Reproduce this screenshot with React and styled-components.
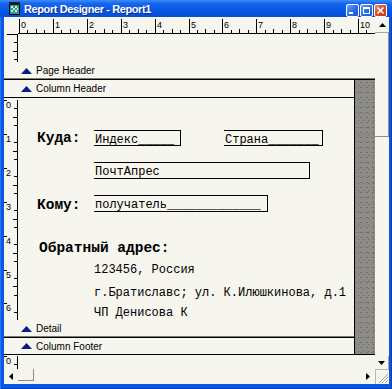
import React from 'react'
import styled, { createGlobalStyle } from 'styled-components'

const UNIT = 33.9
const BEIGE = '#f6f5ee'

const GlobalStyle = createGlobalStyle`
  html, body { margin: 0; padding: 0; background: #fff; }
  body { font-family: "Liberation Sans", Arial, sans-serif; }
`

const Window = styled.div`
  width: 392px;
  height: 389px;
  display: flex;
  flex-direction: column;
  background: #0a5ae6;
  overflow: hidden;
`

const TitleBar = styled.div`
  height: 17px;
  flex: none;
  display: flex;
  align-items: center;
  padding: 0 5px 0 9px;
  background: linear-gradient(to bottom, #3d8cf8 0%, #1667ee 20%, #0757e4 60%, #0550d8 100%);
`

const TitleText = styled.span`
  margin-left: 4px;
  color: #fff;
  font-weight: bold;
  font-size: 11px;
  letter-spacing: -0.4px;
  text-shadow: 1px 1px 0 #0a2f8a;
  white-space: nowrap;
`

const TitleButtons = styled.div`
  margin-left: auto;
  align-self: flex-end;
  display: flex;
  gap: 1px;
`

const TitleBtn = styled.div`
  width: 13px;
  height: 13px;
  box-sizing: border-box;
  border: 1px solid #fff;
  border-radius: 2px;
  display: flex;
  align-items: center;
  justify-content: center;
  background: ${p => p.$close
    ? 'linear-gradient(135deg, #f08a68 0%, #dc4a22 55%, #c2360f 100%)'
    : 'linear-gradient(135deg, #6aa2f8 0%, #2c6ae6 55%, #1a52cf 100%)'};
`

const Frame = styled.div`
  flex: 1;
  padding: 0 3px 5px 4px;
  background: #0a58e2;
  box-shadow: inset 1px 0 0 #2f74f0, inset -1px 0 0 #073fb8, inset 0 -1px 0 #073fb8;
`

const Body = styled.div`
  display: grid;
  grid-template-columns: 371px 14px;
  grid-template-rows: 352px 15px;
  background: ${BEIGE};
  height: 100%;
`

const Main = styled.div`
  display: flex;
  flex-direction: column;
  overflow: hidden;
`

const RulerRow = styled.div`
  height: 17px;
  flex: none;
  display: flex;
`

const Corner = styled.div`
  width: 14px;
  flex: none;
`

const Section = styled.div`
  height: ${p => p.$h}px;
  flex: none;
  display: flex;
`

const Canvas = styled.div`
  flex: 1;
  position: relative;
  overflow: hidden;
`

const Bar = styled.div`
  height: ${p => p.$h}px;
  flex: none;
  box-sizing: border-box;
  display: flex;
  align-items: center;
  gap: 4px;
  padding-left: 17px;
  border-bottom: 1px solid #000;
  box-shadow: ${p => p.$double ? 'inset 0 -1px 0 #7a7a7a' : 'none'};
  font-size: 10px;
  color: #000;
  white-space: nowrap;
`

const Middle = styled.div`
  height: 275px;
  flex: none;
  display: flex;
`

const LeftCol = styled.div`
  width: 351px;
  flex: none;
  box-sizing: border-box;
  border-right: 1px solid #000;
  display: flex;
  flex-direction: column;
`

const Outside = styled.div`
  flex: 1;
  box-sizing: border-box;
  border-bottom: 1px solid #000;
  background-color: #8d8c89;
  background-image:
    radial-gradient(circle, #64635f 0.7px, transparent 1px),
    radial-gradient(circle, #6f6e6a 0.6px, transparent 0.9px);
  background-size: 5px 7px, 6px 5px;
  background-position: 1px 2px, 3px 0;
`

const Label = styled.div`
  position: absolute;
  left: ${p => p.$x}px;
  top: ${p => p.$y}px;
  font-family: "Liberation Mono", "Courier New", monospace;
  font-size: ${p => (p.$bold ? 14.5 : 12)}px;
  font-weight: ${p => (p.$bold ? 'bold' : 'normal')};
  line-height: ${p => (p.$bold ? 14 : 12)}px;
  color: #000;
  white-space: nowrap;
`

const Field = styled.div`
  position: absolute;
  left: ${p => p.$x}px;
  top: ${p => p.$y}px;
  width: ${p => p.$w}px;
  height: ${p => p.$h}px;
  box-sizing: border-box;
  border: 1px solid #000;
  border-left: none;
  padding: 3px 0 0 1px;
  overflow: hidden;
  font-family: "Liberation Mono", "Courier New", monospace;
  font-size: 12px;
  line-height: 12px;
  color: #000;
  white-space: nowrap;
`

const VScroll = styled.div`
  display: flex;
  flex-direction: column;
`

const ScrollBtn = styled.div`
  flex: none;
  width: ${p => p.$w || 14}px;
  height: ${p => p.$h || 14}px;
  box-sizing: border-box;
  display: flex;
  align-items: center;
  justify-content: center;
  border-right: ${p => (p.$edge ? '1px solid #a7a69f' : 'none')};
  border-bottom: ${p => (p.$edgeB ? '1px solid #a7a69f' : 'none')};
`

const Thumb = styled.div`
  flex: none;
  width: ${p => p.$w || 14}px;
  height: ${p => p.$h || 15}px;
  box-sizing: border-box;
  border-right: 1px solid #8e8d86;
  border-bottom: 1px solid #8e8d86;
`

const Track = styled.div`
  flex: 1;
`

const HScroll = styled.div`
  display: flex;
  align-items: stretch;
`

const Grip = styled.div`
  box-sizing: border-box;
  border-top: 1px solid #b9b8b0;
  border-left: 1px solid #b9b8b0;
  display: flex;
  align-items: flex-end;
  justify-content: flex-end;
`

function Arrow({ dir }) {
  const pts = {
    up: '0,4 7,4 3.5,0',
    down: '0,0 7,0 3.5,4',
    left: '4,0 4,7 0,3.5',
    right: '0,0 0,7 4,3.5',
  }[dir]
  const vertical = dir === 'up' || dir === 'down'
  return (
    <svg width={vertical ? 7 : 4} height={vertical ? 4 : 7}>
      <polygon points={pts} fill="#000" />
    </svg>
  )
}

function BandTriangle() {
  return (
    <svg width="11" height="6">
      <polygon points="0,6 11,6 5.5,0" fill="#0b1a8c" />
    </svg>
  )
}

function HRuler() {
  const items = []
  for (let n = 0; n <= 10; n++) {
    const x = Math.round(1 + UNIT * n) + 0.5
    items.push(<line key={'m' + n} x1={x} x2={x} y1={2} y2={16} />)
    items.push(
      <text key={'t' + n} x={x + 1.5} y={10.5} stroke="none" fill="#000">
        {n}
      </text>
    )
    for (let k = 1; k < 4; k++) {
      const mx = Math.round(1 + UNIT * (n + k / 4)) + 0.5
      items.push(<line key={'q' + n + k} x1={mx} x2={mx} y1={k === 2 ? 12 : 13} y2={16} />)
    }
  }
  return (
    <svg width="357" height="17" shapeRendering="crispEdges"
      style={{ fontFamily: '"Liberation Sans", Arial, sans-serif', fontSize: 9 }}>
      <g stroke="#000" strokeWidth="1">
        {items}
        <line x1={0} x2={357} y1={16.5} y2={16.5} />
      </g>
    </svg>
  )
}

function VRuler({ height, zero, units, label, topTick }) {
  const items = []
  for (let n = 0; n <= units; n++) {
    const y = Math.round(zero + UNIT * n) + 0.5
    if (label) {
      items.push(<line key={'m' + n} x1={0} x2={3} y1={y} y2={y} />)
      items.push(
        <text key={'t' + n} x={2} y={y + 7} stroke="none" fill="#000">
          {n}
        </text>
      )
    }
    for (let k = 1; k < 4; k++) {
      const my = Math.round(zero + UNIT * (n + k / 4)) + 0.5
      if (my < height) {
        items.push(<line key={'q' + n + k} x1={k === 2 ? 9 : 10} x2={13} y1={my} y2={my} />)
      }
    }
  }
  return (
    <svg width="14" height={height} shapeRendering="crispEdges"
      style={{ flex: 'none', fontFamily: '"Liberation Sans", Arial, sans-serif', fontSize: 9 }}>
      <g stroke="#000" strokeWidth="1">
        {topTick && <line x1={3} x2={14} y1={0.5} y2={0.5} />}
        <line x1={13.5} x2={13.5} y1={Math.max(0, zero)} y2={height} />
        {items}
      </g>
    </svg>
  )
}

function ReportIcon() {
  return (
    <svg width="11" height="13" shapeRendering="crispEdges">
      <rect x="0.5" y="1.5" width="10" height="11" fill="#2f9b8c" stroke="#000" />
      <rect x="0" y="0" width="11" height="3" fill="#1b1b1b" />
      <g fill="#cde9df">
        <rect x="2" y="4" width="2" height="2" />
        <rect x="6" y="4" width="2" height="2" />
        <rect x="4" y="6" width="2" height="2" />
        <rect x="8" y="6" width="1" height="2" />
        <rect x="2" y="8" width="2" height="2" />
        <rect x="6" y="8" width="2" height="2" />
      </g>
    </svg>
  )
}

function SizeGrip() {
  return (
    <svg width="12" height="12">
      <g stroke="#a09f97" strokeWidth="1">
        <line x1="11" y1="2" x2="2" y2="11" />
        <line x1="11" y1="5" x2="5" y2="11" />
        <line x1="11" y1="8" x2="8" y2="11" />
      </g>
      <g stroke="#fff" strokeWidth="1">
        <line x1="12" y1="3" x2="3" y2="12" />
        <line x1="12" y1="6" x2="6" y2="12" />
        <line x1="12" y1="9" x2="9" y2="12" />
      </g>
    </svg>
  )
}

export default function App() {
  return (
    <>
      <GlobalStyle />
      <Window>
        <TitleBar>
          <ReportIcon />
          <TitleText>Report Designer - Report1</TitleText>
          <TitleButtons>
            <TitleBtn>
              <svg width="9" height="9"><rect x="1" y="6" width="4" height="2" fill="#fff" /></svg>
            </TitleBtn>
            <TitleBtn>
              <svg width="9" height="9" shapeRendering="crispEdges">
                <rect x="1.5" y="1.5" width="6" height="6" fill="none" stroke="#fff" />
                <rect x="1" y="1" width="7" height="2" fill="#fff" />
              </svg>
            </TitleBtn>
            <TitleBtn $close>
              <svg width="9" height="9">
                <g stroke="#fff" strokeWidth="1.6">
                  <line x1="1.5" y1="1.5" x2="7.5" y2="7.5" />
                  <line x1="7.5" y1="1.5" x2="1.5" y2="7.5" />
                </g>
              </svg>
            </TitleBtn>
          </TitleButtons>
        </TitleBar>
        <Frame>
          <Body>
            <Main>
              <RulerRow>
                <Corner />
                <HRuler />
              </RulerRow>

              <Section $h={28}>
                <VRuler height={28} zero={0} units={0} topTick />
                <Canvas />
              </Section>
              <Bar $h={18} $double>
                <BandTriangle />
                Page Header
              </Bar>

              <Middle>
                <LeftCol>
                  <Bar $h={18}>
                    <BandTriangle />
                    Column Header
                  </Bar>
                  <Section $h={222}>
                    <VRuler height={222} zero={2} units={6} label />
                    <Canvas>
                      <Label $bold $x={19} $y={33}>Куда:</Label>
                      <Field $x={76} $y={32} $w={87} $h={16}>Индекс_____</Field>
                      <Field $x={206} $y={32} $w={99} $h={16}>Страна_______</Field>
                      <Field $x={76} $y={64} $w={216} $h={17}>ПочтАпрес</Field>
                      <Label $bold $x={19} $y={100}>Кому:</Label>
                      <Field $x={76} $y={97} $w={174} $h={17}>получатель_____________</Field>
                      <Label $bold $x={21} $y={143}>Обратный адрес:</Label>
                      <Label $x={76} $y={166}>123456, Россия</Label>
                      <Label $x={76} $y={189}>г.Братиславс; ул. К.Илюшкинова, д.1</Label>
                      <Label $x={76} $y={209}>ЧП Денисова К</Label>
                    </Canvas>
                  </Section>
                  <Bar $h={18} $double>
                    <BandTriangle />
                    Detail
                  </Bar>
                  <Bar $h={17}>
                    <BandTriangle />
                    Column Footer
                  </Bar>
                </LeftCol>
                <Outside />
              </Middle>

              <Section $h={14}>
                <VRuler height={14} zero={1} units={0} label />
                <Canvas />
              </Section>
            </Main>

            <VScroll>
              <ScrollBtn $h={16} $edgeB><Arrow dir="up" /></ScrollBtn>
              <Thumb $h={104} />
              <Track />
              <ScrollBtn $h={13} $edge><Arrow dir="down" /></ScrollBtn>
            </VScroll>

            <HScroll>
              <ScrollBtn $h={15}><Arrow dir="left" /></ScrollBtn>
              <Thumb $w={16} $h={12} />
              <Track />
              <ScrollBtn $h={15}><Arrow dir="right" /></ScrollBtn>
            </HScroll>
            <Grip><SizeGrip /></Grip>
          </Body>
        </Frame>
      </Window>
    </>
  )
}
